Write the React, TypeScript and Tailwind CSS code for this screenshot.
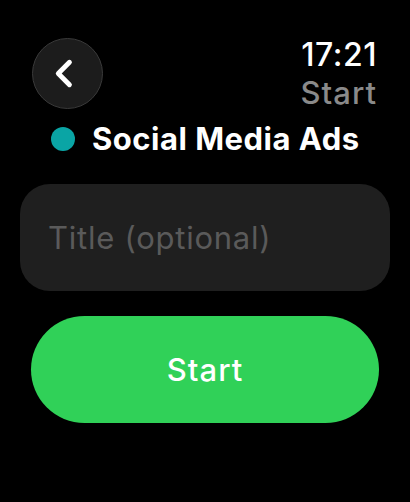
import React from 'react';

const font = { fontFamily: 'Inter, "Noto Sans", sans-serif' };

const App: React.FC = () => {
  return (
    <div className="w-[410px] h-[502px] bg-black text-white overflow-hidden" style={font}>
      {/* Header */}
      <div className="flex justify-between items-start pl-[32px] pr-[33px] pt-[37px]">
        <button className="mt-[1px] w-[71px] h-[71px] rounded-full bg-[#1c1c1c] border-[1.5px] border-[#3a3a3a] flex items-center justify-center">
          <svg width="71" height="71" viewBox="0 0 71 71" fill="none">
            <polyline points="37.5,24 26,35.5 37.5,47" stroke="#ffffff" strokeWidth="5" strokeLinecap="round" strokeLinejoin="round" />
          </svg>
        </button>
        <div className="flex flex-col items-end">
          <span className="text-[32px] leading-[36px] font-medium tracking-[0.5px]">17:21</span>
          <span className="text-[31px] leading-[39px] font-medium tracking-[1px] text-[#8a8a8a]">Start</span>
        </div>
      </div>

      {/* Title */}
      <div className="flex items-center gap-[17px] pl-[51px] mt-[9px]">
        <div className="w-[24px] h-[24px] rounded-full bg-[#0aa5a5]" />
        <span className="text-[31px] leading-[36px] font-bold tracking-[0.5px]">Social Media Ads</span>
      </div>

      {/* Title field */}
      <div className="mx-[20px] mt-[27px] h-[107px] rounded-[30px] bg-[#1f1f1f] flex items-center pl-[28px]">
        <span className="text-[31px] leading-[36px] tracking-[0.75px] text-[#5a5a5a]">Title (optional)</span>
      </div>

      {/* Start button */}
      <button className="mx-[31px] mt-[25px] w-[348px] h-[107px] rounded-full bg-[#30d158] flex items-center justify-center">
        <span className="text-[31px] leading-[36px] font-medium tracking-[1px] text-white">Start</span>
      </button>
    </div>
  );
};

export default App;
